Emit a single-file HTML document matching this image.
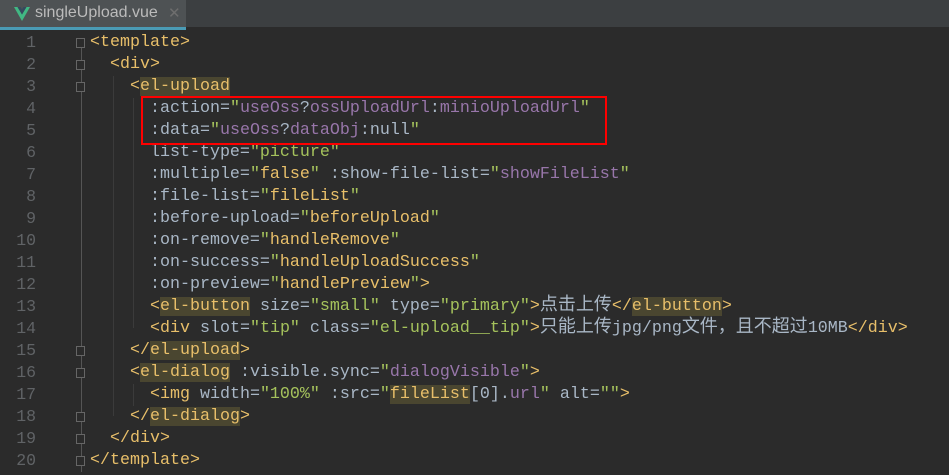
<!DOCTYPE html>
<html><head><meta charset="utf-8"><style>
body{margin:0;width:949px;height:475px;background:#2b2b2b;overflow:hidden;position:relative;font-family:"Liberation Mono","Noto Sans CJK SC",monospace;}
.tabbar{position:absolute;left:0;top:0;width:949px;height:27px;background:#3c3f41;}
.tab{position:absolute;left:0;top:0;width:186px;height:27px;background:#4e5254;}
.tabline{position:absolute;left:0;top:27px;width:186px;height:3px;background:#4a9bb5;}
.tabtxt{position:absolute;left:35px;top:4px;font:16px "Liberation Sans",sans-serif;color:#bbbbbb;}
.x{position:absolute;left:168px;top:4px;color:#6e6e6e;font:15px "Liberation Sans",sans-serif;}
.fold{position:absolute;left:81px;top:42px;width:1px;height:430px;background:#555;}
.ln{position:absolute;left:0;width:36px;text-align:right;color:#606366;font-size:16.5px;}
.code{position:absolute;left:90px;white-space:pre;font-size:16.67px;color:#a9b7c6;}
.t{color:#e8bf6a}.h{background:#4a4630}.s{color:#a5c25c}.p{color:#9876aa}
.c{font-size:18px;color:#a9b7c6;line-height:0}
.box{position:absolute;left:141px;top:96px;width:462px;height:45px;border:2px solid #ff0000;}
.guide{position:absolute;width:1px;background:#3b3b3b;}
.fm{position:absolute;left:76px;width:9px;height:10px;border:1px solid #666;background:#2b2b2b;box-sizing:border-box;}
</style></head><body>
<div class="tabbar"><div class="tab"></div><div class="tabline"></div>
<svg style="position:absolute;left:14px;top:7px" width="16" height="14" viewBox="0 0 16 14"><path d="M0 0h3.5L8 7.5 12.5 0H16L8 14z" fill="#41b883"/><path d="M3.5 0H6.5L8 2.6 9.5 0h3L8 7.5z" fill="#35495e"/></svg>
<div class="tabtxt">singleUpload.vue</div><div class="x">✕</div></div>
<div class="fold"></div>
<div class="guide" style="left:113px;top:76px;height:340px"></div>
<div class="guide" style="left:133px;top:98px;height:230px"></div>
<div class="guide" style="left:133px;top:384px;height:22px"></div>
<div class="fm" style="top:38px"></div><div class="fm" style="top:60px"></div><div class="fm" style="top:82px"></div>
<div class="fm" style="top:346px"></div><div class="fm" style="top:368px"></div><div class="fm" style="top:412px"></div>
<div class="fm" style="top:434px"></div><div class="fm" style="top:456px"></div>
<div class="code" style="top:32px;line-height:22px"><span class="t">&lt;template&gt;</span>
  <span class="t">&lt;div&gt;</span>
    <span class="t">&lt;<span class="h">el-upload</span></span>
      :action=<span class="s">"</span><span class="p">useOss</span>?<span class="p">ossUploadUrl</span>:<span class="p">minioUploadUrl</span><span class="s">"</span>
      :data=<span class="s">"</span><span class="p">useOss</span>?<span class="p">dataObj</span>:null<span class="s">"</span>
      list-type=<span class="s">"picture"</span>
      :multiple=<span class="s">"</span><span class="t">false</span><span class="s">"</span> :show-file-list=<span class="s">"</span><span class="p">showFileList</span><span class="s">"</span>
      :file-list=<span class="s">"</span><span class="t">fileList</span><span class="s">"</span>
      :before-upload=<span class="s">"</span><span class="t">beforeUpload</span><span class="s">"</span>
      :on-remove=<span class="s">"</span><span class="t">handleRemove</span><span class="s">"</span>
      :on-success=<span class="s">"</span><span class="t">handleUploadSuccess</span><span class="s">"</span>
      :on-preview=<span class="s">"</span><span class="t">handlePreview</span><span class="s">"</span><span class="t">&gt;</span>
      <span class="t">&lt;<span class="h">el-button</span></span> size=<span class="s">"small"</span> type=<span class="s">"primary"</span><span class="t">&gt;</span><span class="c">点击上传</span><span class="t">&lt;/<span class="h">el-button</span>&gt;</span>
      <span class="t">&lt;div</span> slot=<span class="s">"tip"</span> class=<span class="s">"el-upload__tip"</span><span class="t">&gt;</span><span class="c">只能上传</span>jpg/png<span class="c">文件，且不超过</span>10MB<span class="t">&lt;/div&gt;</span>
    <span class="t">&lt;/<span class="h">el-upload</span>&gt;</span>
    <span class="t">&lt;<span class="h">el-dialog</span></span> :visible.sync=<span class="s">"</span><span class="p">dialogVisible</span><span class="s">"</span><span class="t">&gt;</span>
      <span class="t">&lt;img</span> width=<span class="s">"100%"</span> :src=<span class="s">"</span><span class="t h">fileList</span>[0].<span class="p">url</span><span class="s">"</span> alt=<span class="s">""</span><span class="t">&gt;</span>
    <span class="t">&lt;/<span class="h">el-dialog</span>&gt;</span>
  <span class="t">&lt;/div&gt;</span>
<span class="t">&lt;/template&gt;</span></div>
<div class="ln" style="top:32px;line-height:22px;white-space:pre">1
2
3
4
5
6
7
8
9
10
11
12
13
14
15
16
17
18
19
20</div>
<div class="box"></div>
</body></html>
